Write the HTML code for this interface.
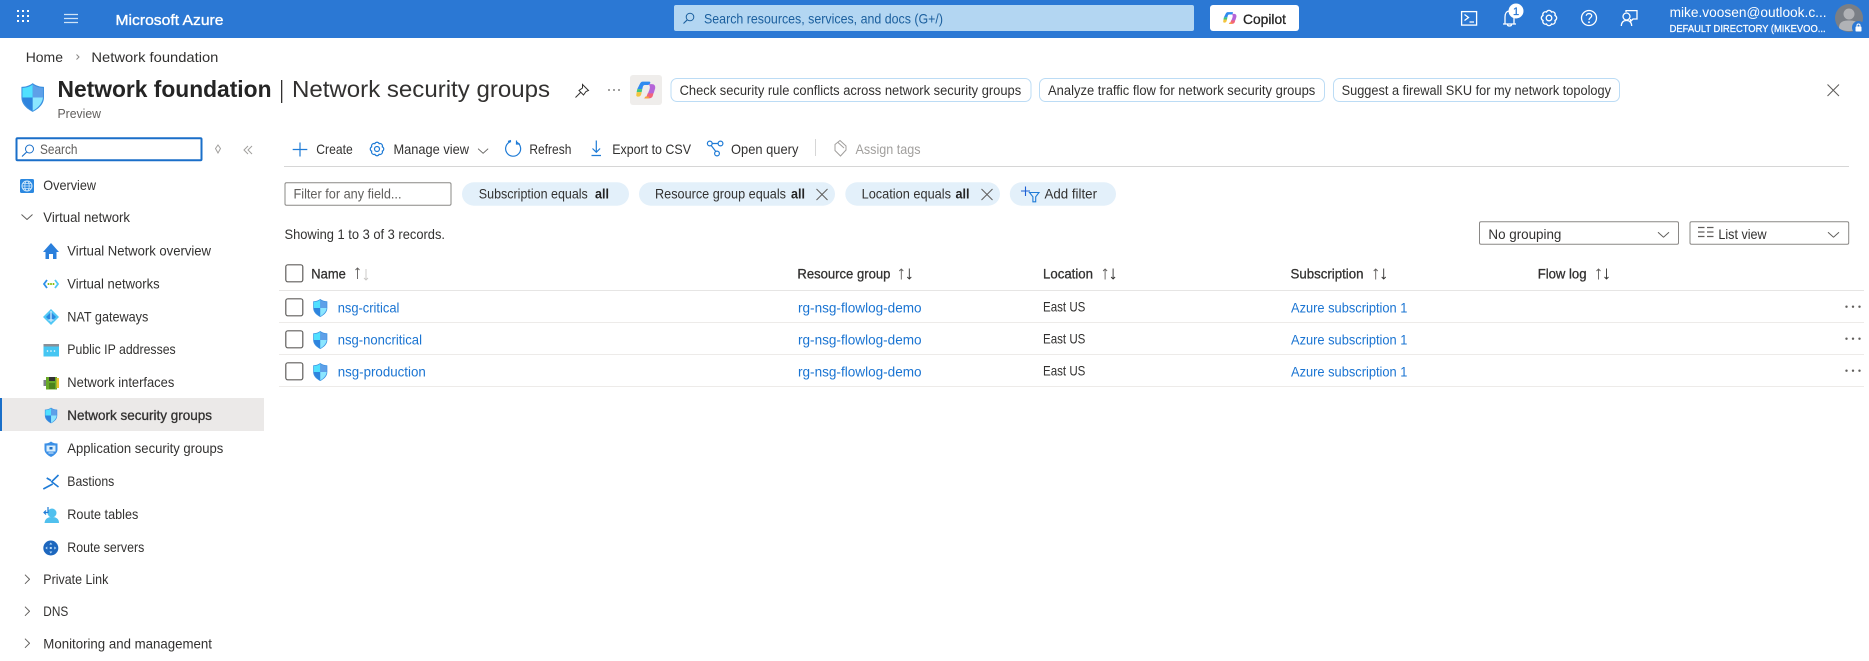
<!DOCTYPE html>
<html lang="en"><head><meta charset="utf-8"><title>Network foundation | Network security groups</title>
<style>
html,body{margin:0;padding:0;background:#fff;width:1869px;height:661px;overflow:hidden}
svg{display:block;position:absolute;left:0;top:0;filter:blur(.3px)}
text{font-family:"Liberation Sans",sans-serif;font-size:14px;fill:#323130;white-space:pre}
.s{stroke:#323130;stroke-width:.3px}
.l{fill:#1a74d2}
.g{fill:#605e5c}
.d{fill:#a19f9d}
.w{fill:#fff}
.ic{fill:none;stroke:#1f7bd6;stroke-width:1.2}
.hi{fill:none;stroke:#fff;stroke-width:1.3}
.gl{fill:none;stroke:#605e5c;stroke-width:1}
.box{fill:#fff;stroke:#605e5c;stroke-width:1.2}
.pill{fill:#e3f0fa}
.sug{fill:#fff;stroke:#bcdcf5;stroke-width:1}
</style></head><body>
<svg width="1869" height="661" viewBox="0 0 1869 661" xmlns="http://www.w3.org/2000/svg">
<defs>
<symbol id="shield" viewBox="0 0 24 28">
<path d="M12 0C9 2.500 5 3.600 1 3.600V14C1 21 7 25.500 12 28C17 25.500 23 21 23 14V3.600C19 3.600 15 2.500 12 0Z" fill="#3b90e0"/>
<path d="M12 1.200C9.500 3.500 6 4.500 2 4.700V14H12Z" fill="#50e0ff"/>
<path d="M12 1.200V14H22V4.700C18 4.500 14.500 3.500 12 1.200Z" fill="#5ea0e8"/>
<path d="M2 14C2.500 20 8 25 12 27V14Z" fill="#2e84de"/>
<path d="M12 14V27C16 25 21.500 20 22 14Z" fill="#8be6ff"/>
</symbol>
<symbol id="copilot" viewBox="0 0 24 24">
<path d="M8 2H16C17 2 17.500 3 17 4L15 6H11C9 6 8.500 7 8 9L7.500 11H1.500L4.500 5C5.500 3 6.500 2 8 2Z" fill="#2f8bf0"/>
<path d="M1.500 11H7.500L6.800 14.500H.8Z" fill="#3fc47f"/>
<path d="M.8 14.500H6.800L6.300 17C5.800 19 4.500 20 3 20H2C.5 20 0 18.500 .5 17Z" fill="#f2c53d"/>
<path d="M15 5H19C22 5 23.500 7 23 10L21.500 15C21 16.500 20 17 18 17H14L16 12C17 9 17 7 15 5Z" fill="#b565d8"/>
<path d="M14 16H21L20 19.500C19 21.500 17.500 22 15.500 22H9C11.500 22 12.500 20 13.500 17.500Z" fill="#f2637a"/>
<path d="M11 20H16L15 22H10Z" fill="#f7a53a"/>
</symbol>
<symbol id="chev" viewBox="0 0 12 6"><path d="M.5 .5L6 5.500L11.500 .5" fill="none" stroke="#605e5c" stroke-width="1"/></symbol>
<symbol id="chr" viewBox="0 0 6 11"><path d="M.5 .5L5.500 5.500L.5 10.500" fill="none" stroke="#605e5c" stroke-width="1"/></symbol>
<symbol id="sort" viewBox="0 0 16 12">
<path d="M3.500 11.500V1M1.500 3L3.500 1L5.500 3" fill="none" stroke="#605e5c" stroke-width=".9"/>
<path d="M11.500 .5V11M9.500 9L11.500 11L13.500 9" fill="none" stroke="#323130" stroke-width=".9"/>
</symbol>
<symbol id="x" viewBox="0 0 12 12"><path d="M.5 .5L11.500 11.500M11.500 .5L.5 11.500" fill="none" stroke="#605e5c" stroke-width="1"/></symbol>
</defs>

<!-- top bar -->
<rect width="1869" height="38" fill="#2b78d4"/>
<g fill="#fff">
<rect x="17" y="10" width="2" height="2"/><rect x="22" y="10" width="2" height="2"/><rect x="27" y="10" width="2" height="2"/>
<rect x="17" y="15" width="2" height="2"/><rect x="22" y="15" width="2" height="2"/><rect x="27" y="15" width="2" height="2"/>
<rect x="17" y="20" width="2" height="2"/><rect x="22" y="20" width="2" height="2"/><rect x="27" y="20" width="2" height="2"/>
</g>
<path d="M64 14.500H78M64 18.500H78M64 22.500H78" stroke="#cfe3f7" stroke-width="1.300" fill="none"/>
<text x="115.500" y="25" class="w" style="font-size:15px;stroke:#fff;stroke-width:.35px" textLength="108" lengthAdjust="spacingAndGlyphs">Microsoft Azure</text>
<rect x="674" y="5" width="520" height="26" rx="2" fill="#b3d6f2"/>
<circle cx="690" cy="17" r="3.800" fill="none" stroke="#1b5f9e" stroke-width="1"/><path d="M687.300 19.800L683.500 23.500" stroke="#1b5f9e" stroke-width="1.100"/>
<text x="704" y="23.500" style="fill:#1b5f9e" textLength="239" lengthAdjust="spacingAndGlyphs">Search resources, services, and docs (G+/)</text>
<rect x="1210" y="5" width="89" height="26" rx="3" fill="#fff"/>
<use href="#copilot" x="1222" y="11" width="16" height="14"/>
<text x="1243" y="24" style="fill:#242424;stroke:#242424;stroke-width:.3px" textLength="43" lengthAdjust="spacingAndGlyphs">Copilot</text>
<!-- header icons -->
<rect x="1461.600" y="11.600" width="15" height="13.500" class="hi" stroke-width="1.100"/>
<path d="M1464.500 14.500L1468.500 17.500L1464.500 20.500M1469.500 22H1474" class="hi"/>
<path d="M1503 24H1516M1505 24V17C1505 13.500 1506.500 11 1509.500 11C1512.500 11 1514 13.500 1514 17V24M1507.500 24.500C1507.500 26.500 1511.500 26.500 1511.500 24.500" class="hi"/>
<circle cx="1516" cy="11" r="7.500" fill="#fff"/>
<text x="1513" y="15.200" style="font-size:11px;fill:#2b78d4;stroke:#2b78d4;stroke-width:.3px">1</text>
<g transform="translate(1549 18)" class="hi" stroke-width="1.100">
<circle r="2.800"/>
<path d="M6 -2.490A2.700 2.700 0 0 1 6 2.490A2.700 2.700 0 0 1 2.490 6A2.700 2.700 0 0 1 -2.490 6A2.700 2.700 0 0 1 -6 2.490A2.700 2.700 0 0 1 -6 -2.490A2.700 2.700 0 0 1 -2.490 -6A2.700 2.700 0 0 1 2.490 -6A2.700 2.700 0 0 1 6 -2.490Z"/>
</g>
<circle cx="1589" cy="18" r="7.500" class="hi"/>
<path d="M1586.300 15.800C1586.300 12.800 1591.700 12.800 1591.700 15.800C1591.700 17.800 1589 17.800 1589 20" class="hi" stroke-width="1.200"/><circle cx="1589" cy="22.200" r=".9" fill="#fff"/>
<path d="M1626 12V10.600H1637V19H1633L1630.500 21.500V19" class="hi" stroke-width="1.100"/>
<circle cx="1626.500" cy="16.500" r="3.500" class="hi" stroke-width="1.100"/><path d="M1621.300 26C1621.500 22 1623.500 20.500 1626.500 20.500C1629.500 20.500 1631.500 22 1631.700 26" class="hi" stroke-width="1.100"/>
<text x="1669.600" y="17" class="w" style="font-size:14px" textLength="157" lengthAdjust="spacingAndGlyphs">mike.voosen@outlook.c...</text>
<text x="1669.600" y="32" class="w" style="font-size:10.500px;stroke:#fff;stroke-width:.25px" textLength="156" lengthAdjust="spacingAndGlyphs">DEFAULT DIRECTORY (MIKEVOO...</text>
<circle cx="1849" cy="18" r="14" fill="#7a7f86"/>
<circle cx="1849" cy="14" r="5.500" fill="#b0b2b6"/><path d="M1839 28C1839 22 1843 20.500 1849 20.500C1855 20.500 1859 22 1859 28C1855 32 1843 32 1839 28Z" fill="#b0b2b6"/>
<circle cx="1858.500" cy="27.500" r="6.500" fill="#2b78d4"/>
<rect x="1855.500" y="26.500" width="6" height="5" rx=".8" fill="#fff"/><path d="M1857 26.500V25.300C1857 23.500 1860 23.500 1860 25.300V26.500" fill="none" stroke="#fff" stroke-width="1"/>

<!-- breadcrumb -->
<text x="25.700" y="62" textLength="37.300" lengthAdjust="spacingAndGlyphs">Home</text>
<path d="M76.500 54.500L79 57L76.500 59.500" fill="none" stroke="#8a8886" stroke-width="1"/>
<text x="91.400" y="62" textLength="127" lengthAdjust="spacingAndGlyphs">Network foundation</text>

<!-- title -->
<use href="#shield" x="20.400" y="83" width="24.600" height="29"/>
<text x="57.500" y="97" style="font-size:23px;font-weight:bold;fill:#242424" textLength="214" lengthAdjust="spacingAndGlyphs">Network foundation</text>
<rect x="281" y="80" width="1.300" height="23" fill="#323130"/>
<text x="292" y="97" style="font-size:23px;fill:#323130" textLength="258" lengthAdjust="spacingAndGlyphs">Network security groups</text>
<text x="57.500" y="118" class="g" style="font-size:13px" textLength="43.500" lengthAdjust="spacingAndGlyphs">Preview</text>
<path d="M582.500 84.500L588.500 90.500L586 91.500L583.500 95L579 90.500L582.500 88Z M580.500 92.500L575.500 97.500" fill="none" stroke="#323130" stroke-width="1"/>
<g fill="#605e5c"><circle cx="609" cy="90" r=".9"/><circle cx="614" cy="90" r=".9"/><circle cx="619" cy="90" r=".9"/></g>
<rect x="630" y="75" width="32" height="30" rx="3" fill="#efedeb"/>
<use href="#copilot" x="635" y="80" width="22" height="20"/>

<rect x="671" y="78.500" width="360" height="23" rx="6" class="sug"/>
<text x="679.600" y="95" style="font-size:13.500px" textLength="341.600" lengthAdjust="spacingAndGlyphs">Check security rule conflicts across network security groups</text>
<rect x="1039.500" y="78.500" width="285" height="23" rx="6" class="sug"/>
<text x="1048" y="95" style="font-size:13.500px" textLength="267.300" lengthAdjust="spacingAndGlyphs">Analyze traffic flow for network security groups</text>
<rect x="1333.500" y="78.500" width="286" height="23" rx="6" class="sug"/>
<text x="1341.600" y="95" style="font-size:13.500px" textLength="269.400" lengthAdjust="spacingAndGlyphs">Suggest a firewall SKU for my network topology</text>
<use href="#x" x="1827" y="84" width="12.500" height="12.500"/>

<!-- sidebar -->
<rect x="16.500" y="138.300" width="185" height="22" fill="#fff" stroke="#1a6fc9" stroke-width="2" rx="1"/>
<circle cx="29.500" cy="149" r="4" fill="none" stroke="#1a6fc9" stroke-width="1"/><path d="M26.700 152L22 156.500" stroke="#1a6fc9" stroke-width="1.200"/>
<text x="40" y="154" class="g" textLength="37.500" lengthAdjust="spacingAndGlyphs">Search</text>
<path d="M218 145L220.500 148.500L218 153L215.500 148.500Z" fill="none" stroke="#a19f9d" stroke-width="1"/>
<path d="M248 146L244 150L248 154M252 146L248 150L252 154" fill="none" stroke="#a19f9d" stroke-width="1"/>

<rect x="20" y="179" width="14" height="14" rx="1.500" fill="#2b88e0"/>
<circle cx="27" cy="186" r="5" fill="none" stroke="#cfe8fb" stroke-width="1"/><ellipse cx="27" cy="186" rx="2.200" ry="5" fill="none" stroke="#cfe8fb" stroke-width=".8"/><path d="M22 186H32M23 183.500H31M23 188.500H31" stroke="#cfe8fb" stroke-width=".7"/>
<text x="43.300" y="190" textLength="52.700" lengthAdjust="spacingAndGlyphs">Overview</text>
<use href="#chev" x="21" y="214" width="12" height="6"/>
<text x="43.300" y="222" textLength="86.700" lengthAdjust="spacingAndGlyphs">Virtual network</text>

<path d="M51 243L43 252H45.500V259H49V254H53V259H56.500V252H59Z" fill="#2a7fdc"/><rect x="49" y="254" width="4" height="5" fill="#fff"/>
<text x="67.300" y="255.300" textLength="143.700" lengthAdjust="spacingAndGlyphs">Virtual Network overview</text>
<path d="M47 280L44 284L47 288" fill="none" stroke="#2d8fe8" stroke-width="1.800"/><path d="M55 280L58 284L55 288" fill="none" stroke="#50c8f5" stroke-width="1.800"/>
<circle cx="48.500" cy="284" r="1" fill="#7fba00"/><circle cx="51" cy="284" r="1" fill="#7fba00"/><circle cx="53.500" cy="284" r="1" fill="#7fba00"/>
<text x="67.300" y="288.300" textLength="92.300" lengthAdjust="spacingAndGlyphs">Virtual networks</text>
<path d="M51 309L59 317L51 325L43 317Z" fill="#50c8f5"/><path d="M51 312L56 317L51 322L46 317Z" fill="#2b88e0"/><path d="M51 311V322M48.500 320H53.500" stroke="#d8f1ff" stroke-width="1.200"/>
<text x="67.300" y="321.300" textLength="81" lengthAdjust="spacingAndGlyphs">NAT gateways</text>
<rect x="43.500" y="344" width="15.500" height="12.500" fill="#46c6f2"/><rect x="43.500" y="344" width="15.500" height="2.500" fill="#8a8f96"/>
<g fill="#fff"><circle cx="47.500" cy="351" r=".8"/><circle cx="51" cy="351" r=".8"/><circle cx="54.500" cy="351" r=".8"/></g>
<text x="67.300" y="354" textLength="108.400" lengthAdjust="spacingAndGlyphs">Public IP addresses</text>
<rect x="43.500" y="380" width="3" height="6" fill="#7a7f86"/><rect x="46" y="377" width="11" height="12.500" fill="#68a928"/><rect x="56.500" y="378" width="2.500" height="10" fill="#e8c430"/><rect x="49" y="377" width="6" height="4" fill="#333"/><path d="M50 383V389M52 383V389M54 383V389" stroke="#2f5c10" stroke-width="1"/>
<text x="67.300" y="387" textLength="107" lengthAdjust="spacingAndGlyphs">Network interfaces</text>

<rect x="0" y="398" width="264" height="33" fill="#ebe9e8"/>
<rect x="0" y="398" width="2" height="33" fill="#1a6fc9"/>
<use href="#shield" x="44.300" y="407" width="13.500" height="17"/>
<text x="67.300" y="420" class="s" textLength="144.700" lengthAdjust="spacingAndGlyphs">Network security groups</text>

<path d="M51 441.500C49 443 47 443.500 44.500 443.500V449.500C44.500 453 48 455.500 51 457C54 455.500 57.500 453 57.500 449.500V443.500C55 443.500 53 443 51 441.500Z" fill="#3b8fe6"/>
<rect x="46.500" y="445.500" width="9" height="6" fill="#d8eefc"/><rect x="49.500" y="447" width="3" height="2.500" fill="#1f6fc4"/><path d="M48.500 453H53.500" stroke="#d8eefc" stroke-width="1"/>
<text x="67.300" y="453" textLength="156" lengthAdjust="spacingAndGlyphs">Application security groups</text>
<path d="M58.500 475L51.700 481.700L58.500 487M46.700 478L51 480.500M43.300 489L52.700 484" fill="none" stroke="#1f7bd6" stroke-width="1.600"/>
<text x="67.300" y="486" textLength="47" lengthAdjust="spacingAndGlyphs">Bastions</text>
<circle cx="52" cy="513" r="4.500" fill="#50c0ee"/><path d="M44.500 523C45 518.500 48 517 52 517C56 517 59 518.500 59 523Z" fill="#50c0ee"/>
<path d="M48 507V512.500H44.500M46 510.500L44 512.500L46 514.500" fill="none" stroke="#1f7bd6" stroke-width="1.200"/>
<text x="67.300" y="519" textLength="71" lengthAdjust="spacingAndGlyphs">Route tables</text>
<circle cx="50.800" cy="548" r="7.500" fill="#1d67be"/><path d="M50.800 542.500L52.300 544.500H49.300ZM50.800 553.500L52.300 551.500H49.300ZM45.300 548L47.300 546.500V549.500ZM56.300 548L54.300 546.500V549.500Z" fill="#b9dcf8"/><rect x="49.800" y="547" width="2" height="2" fill="#b9dcf8"/>
<text x="67.300" y="552" textLength="77" lengthAdjust="spacingAndGlyphs">Route servers</text>
<use href="#chr" x="24.500" y="574" width="5.500" height="10.500"/>
<text x="43.300" y="584" textLength="65" lengthAdjust="spacingAndGlyphs">Private Link</text>
<use href="#chr" x="24.500" y="606" width="5.500" height="10.500"/>
<text x="43.300" y="616" textLength="25" lengthAdjust="spacingAndGlyphs">DNS</text>
<use href="#chr" x="24.500" y="638" width="5.500" height="10.500"/>
<text x="43.300" y="648.300" textLength="168.700" lengthAdjust="spacingAndGlyphs">Monitoring and management</text>

<!-- toolbar -->
<path d="M300 142.500V156.500M292.700 149.500H307.300" class="ic" stroke-width="1.400"/>
<text x="316.300" y="154" textLength="36.400" lengthAdjust="spacingAndGlyphs">Create</text>
<g transform="translate(377 149)" class="ic" stroke-width="1"><circle r="2.500"/>
<path d="M5.300 -2.200A2.400 2.400 0 0 1 5.300 2.200A2.400 2.400 0 0 1 2.200 5.300A2.400 2.400 0 0 1 -2.200 5.300A2.400 2.400 0 0 1 -5.300 2.200A2.400 2.400 0 0 1 -5.300 -2.200A2.400 2.400 0 0 1 -2.200 -5.300A2.400 2.400 0 0 1 2.200 -5.300A2.400 2.400 0 0 1 5.300 -2.200Z"/></g>
<text x="393.500" y="154" textLength="75.500" lengthAdjust="spacingAndGlyphs">Manage view</text>
<use href="#chev" x="477.600" y="148" width="11" height="6"/>
<path d="M511 141.500A7.500 7.500 0 1 0 516.500 142M511 140.500L508 141.500M516.500 140.500V144H520" class="ic" stroke-width="1.200"/>
<text x="529.400" y="154" textLength="42" lengthAdjust="spacingAndGlyphs">Refresh</text>
<path d="M596.300 140.500V152M592.500 148.500L596.300 152.300L600.100 148.500M591.500 155.500H601" class="ic"/>
<text x="612.200" y="154" textLength="78.800" lengthAdjust="spacingAndGlyphs">Export to CSV</text>
<circle cx="709.800" cy="143.500" r="2.400" class="ic"/><circle cx="720.500" cy="143.500" r="2.400" class="ic"/><circle cx="717" cy="153.500" r="2.400" class="ic"/>
<path d="M712.200 143.500H718.100M711.200 145.500L715.700 151.400" class="ic"/>
<text x="731" y="154" textLength="67.400" lengthAdjust="spacingAndGlyphs">Open query</text>
<rect x="815" y="139" width="1" height="17" fill="#d6d6d6"/>
<path d="M840 140.500L846 146V150L840.500 156L835 150.500V144.500Z M838 142.500L844 148" fill="none" stroke="#a19f9d" stroke-width="1"/>
<text x="855.500" y="154" class="d" textLength="65" lengthAdjust="spacingAndGlyphs">Assign tags</text>
<rect x="284" y="166" width="1565" height="1" fill="#d6d6d6"/>

<!-- filters -->
<rect x="285" y="182.800" width="166" height="22.500" rx="1.500" fill="#fff" stroke="#8a8886" stroke-width="1"/>
<text x="293.500" y="198.300" class="g" textLength="108" lengthAdjust="spacingAndGlyphs">Filter for any field...</text>
<rect x="462" y="182.300" width="167" height="23.400" rx="11.700" class="pill"/>
<text x="478.800" y="198.300" textLength="109" lengthAdjust="spacingAndGlyphs">Subscription equals</text>
<text x="595" y="198.300" style="font-weight:bold;fill:#242424" textLength="14" lengthAdjust="spacingAndGlyphs">all</text>
<rect x="639" y="182.300" width="196" height="23.400" rx="11.700" class="pill"/>
<text x="655" y="198.300" textLength="131" lengthAdjust="spacingAndGlyphs">Resource group equals</text>
<text x="791" y="198.300" style="font-weight:bold;fill:#242424" textLength="14" lengthAdjust="spacingAndGlyphs">all</text>
<use href="#x" x="816" y="188.500" width="12" height="12"/>
<rect x="845.300" y="182.300" width="154.700" height="23.400" rx="11.700" class="pill"/>
<text x="861.600" y="198.300" textLength="89.400" lengthAdjust="spacingAndGlyphs">Location equals</text>
<text x="955.500" y="198.300" style="font-weight:bold;fill:#242424" textLength="14" lengthAdjust="spacingAndGlyphs">all</text>
<use href="#x" x="981" y="188.500" width="12" height="12"/>
<rect x="1009.800" y="182.300" width="106.200" height="23.400" rx="11.700" class="pill"/>
<path d="M1025.500 186.500V196M1021 191H1030" stroke="#1c5fd4" stroke-width="1.100" fill="none"/>
<path d="M1029.500 192.500H1039L1035.700 196.800V201.800H1032.900V196.800Z" fill="none" stroke="#1f7bd6" stroke-width="1.100"/>
<text x="1044.500" y="198.300" textLength="52.500" lengthAdjust="spacingAndGlyphs">Add filter</text>

<text x="284.500" y="239" textLength="160.500" lengthAdjust="spacingAndGlyphs">Showing 1 to 3 of 3 records.</text>

<rect x="1479.500" y="221.800" width="199" height="22.500" rx="1.500" fill="#fff" stroke="#8a8886" stroke-width="1"/>
<text x="1488.400" y="239" textLength="73" lengthAdjust="spacingAndGlyphs">No grouping</text>
<use href="#chev" x="1657" y="231.700" width="13" height="6"/>
<rect x="1690" y="221.800" width="158.700" height="22.500" rx="1.500" fill="#fff" stroke="#8a8886" stroke-width="1"/>
<path d="M1698 227.500H1704.500M1707 227.500H1713.500M1698 232H1704.500M1707 232H1713.500M1698 236.500H1704.500M1707 236.500H1713.500" stroke="#605e5c" stroke-width="1.200" fill="none"/>
<text x="1718.400" y="239" textLength="48.200" lengthAdjust="spacingAndGlyphs">List view</text>
<use href="#chev" x="1827" y="231.700" width="13" height="6"/>

<!-- table header -->
<rect x="285.800" y="264.800" width="17" height="17" rx="2" class="box"/>
<text x="311.300" y="278.300" class="s" textLength="34.500" lengthAdjust="spacingAndGlyphs">Name</text>
<path d="M357.500 279V268M355.500 270L357.500 268L359.500 270" fill="none" stroke="#605e5c" stroke-width=".9"/>
<path d="M366 269V280M364 278L366 280L368 278" fill="none" stroke="#c8c6c4" stroke-width=".9"/>
<text x="797.400" y="278.300" class="s" textLength="93" lengthAdjust="spacingAndGlyphs">Resource group</text>
<use href="#sort" x="897.600" y="268" width="16.400" height="12"/>
<text x="1043" y="278.300" class="s" textLength="50" lengthAdjust="spacingAndGlyphs">Location</text>
<use href="#sort" x="1101.400" y="268" width="16.400" height="12"/>
<text x="1290.500" y="278.300" class="s" textLength="73" lengthAdjust="spacingAndGlyphs">Subscription</text>
<use href="#sort" x="1372" y="268" width="16.400" height="12"/>
<text x="1537.700" y="278.300" class="s" textLength="48.800" lengthAdjust="spacingAndGlyphs">Flow log</text>
<use href="#sort" x="1594.800" y="268" width="16.400" height="12"/>
<rect x="279" y="290" width="1585" height="1" fill="#e6e5e4"/>
<rect x="279" y="322" width="1585" height="1" fill="#edebe9"/>
<rect x="279" y="354" width="1585" height="1" fill="#edebe9"/>
<rect x="279" y="386" width="1585" height="1" fill="#edebe9"/>

<!-- rows -->
<rect x="285.800" y="298.800" width="17" height="17" rx="2" class="box"/>
<use href="#shield" x="312" y="299" width="16.500" height="18"/>
<text x="337.700" y="312.700" class="l" textLength="61.700" lengthAdjust="spacingAndGlyphs">nsg-critical</text>
<text x="798" y="312.700" class="l" textLength="123.600" lengthAdjust="spacingAndGlyphs">rg-nsg-flowlog-demo</text>
<text x="1043" y="311.700" textLength="42.400" lengthAdjust="spacingAndGlyphs">East US</text>
<text x="1291" y="312.700" class="l" textLength="116.400" lengthAdjust="spacingAndGlyphs">Azure subscription 1</text>
<g fill="#605e5c"><circle cx="1846.500" cy="306.700" r="1.200"/><circle cx="1853" cy="306.700" r="1.200"/><circle cx="1859.500" cy="306.700" r="1.200"/></g>

<rect x="285.800" y="330.800" width="17" height="17" rx="2" class="box"/>
<use href="#shield" x="312" y="331" width="16.500" height="18"/>
<text x="337.700" y="344.700" class="l" textLength="84.300" lengthAdjust="spacingAndGlyphs">nsg-noncritical</text>
<text x="798" y="344.700" class="l" textLength="123.600" lengthAdjust="spacingAndGlyphs">rg-nsg-flowlog-demo</text>
<text x="1043" y="343.700" textLength="42.400" lengthAdjust="spacingAndGlyphs">East US</text>
<text x="1291" y="344.700" class="l" textLength="116.400" lengthAdjust="spacingAndGlyphs">Azure subscription 1</text>
<g fill="#605e5c"><circle cx="1846.500" cy="338.700" r="1.200"/><circle cx="1853" cy="338.700" r="1.200"/><circle cx="1859.500" cy="338.700" r="1.200"/></g>

<rect x="285.800" y="362.800" width="17" height="17" rx="2" class="box"/>
<use href="#shield" x="312" y="363" width="16.500" height="18"/>
<text x="337.700" y="376.700" class="l" textLength="88.100" lengthAdjust="spacingAndGlyphs">nsg-production</text>
<text x="798" y="376.700" class="l" textLength="123.600" lengthAdjust="spacingAndGlyphs">rg-nsg-flowlog-demo</text>
<text x="1043" y="375.700" textLength="42.400" lengthAdjust="spacingAndGlyphs">East US</text>
<text x="1291" y="376.700" class="l" textLength="116.400" lengthAdjust="spacingAndGlyphs">Azure subscription 1</text>
<g fill="#605e5c"><circle cx="1846.500" cy="370.700" r="1.200"/><circle cx="1853" cy="370.700" r="1.200"/><circle cx="1859.500" cy="370.700" r="1.200"/></g>
</svg>
</body></html>
